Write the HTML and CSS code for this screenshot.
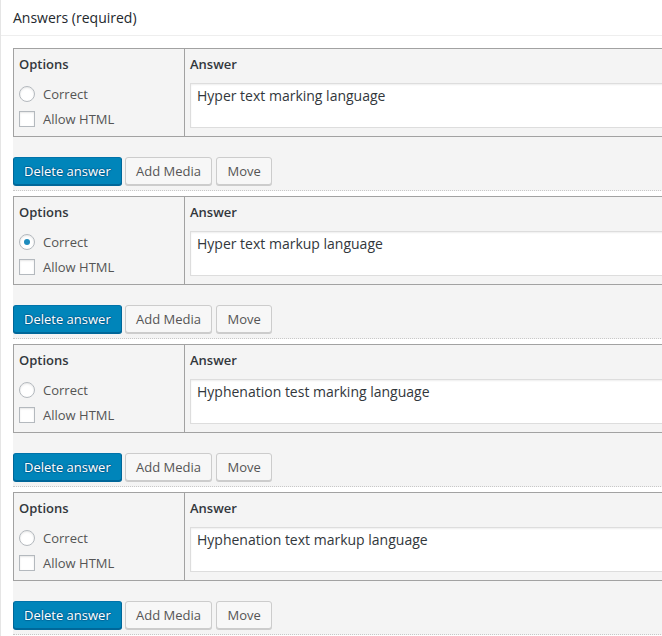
FILE: index.html
```html
<!DOCTYPE html>
<html>
<head>
<meta charset="utf-8">
<link rel="stylesheet" href="styles.css">
</head>
<body>
<div class="postbox">
  <h2 class="box-title">Answers (required)</h2>
  <div class="inside">
    <ul class="answer-list">
      <li class="answer">
        <div class="answer-table">
          <div class="cell cell-options">
            <div class="cell-title">Options</div>
            <label class="opt"><span class="radio"></span><span>Correct</span></label>
            <label class="opt"><span class="check"></span><span>Allow HTML</span></label>
          </div>
          <div class="cell cell-answer">
            <div class="cell-title">Answer</div>
            <div class="textbox">Hyper text marking language</div>
          </div>
        </div>
        <div class="actions"><button class="btn btn-primary">Delete answer</button> <button class="btn">Add Media</button> <button class="btn btn-move">Move</button></div>
      </li>
      <li class="answer">
        <div class="answer-table">
          <div class="cell cell-options">
            <div class="cell-title">Options</div>
            <label class="opt"><span class="radio is-checked"></span><span>Correct</span></label>
            <label class="opt"><span class="check"></span><span>Allow HTML</span></label>
          </div>
          <div class="cell cell-answer">
            <div class="cell-title">Answer</div>
            <div class="textbox">Hyper text markup language</div>
          </div>
        </div>
        <div class="actions"><button class="btn btn-primary">Delete answer</button> <button class="btn">Add Media</button> <button class="btn btn-move">Move</button></div>
      </li>
      <li class="answer">
        <div class="answer-table">
          <div class="cell cell-options">
            <div class="cell-title">Options</div>
            <label class="opt"><span class="radio"></span><span>Correct</span></label>
            <label class="opt"><span class="check"></span><span>Allow HTML</span></label>
          </div>
          <div class="cell cell-answer">
            <div class="cell-title">Answer</div>
            <div class="textbox">Hyphenation test marking language</div>
          </div>
        </div>
        <div class="actions"><button class="btn btn-primary">Delete answer</button> <button class="btn">Add Media</button> <button class="btn btn-move">Move</button></div>
      </li>
      <li class="answer">
        <div class="answer-table">
          <div class="cell cell-options">
            <div class="cell-title">Options</div>
            <label class="opt"><span class="radio"></span><span>Correct</span></label>
            <label class="opt"><span class="check"></span><span>Allow HTML</span></label>
          </div>
          <div class="cell cell-answer">
            <div class="cell-title">Answer</div>
            <div class="textbox">Hyphenation text markup language</div>
          </div>
        </div>
        <div class="actions"><button class="btn btn-primary">Delete answer</button> <button class="btn">Add Media</button> <button class="btn btn-move">Move</button></div>
      </li>
    </ul>
  </div>
</div>
</body>
</html>
```

FILE: styles.css
```css
html, body {
  margin: 0;
  padding: 0;
  overflow: hidden;
  background: #fff;
}

body {
  font-family: "Open Sans", "Liberation Sans", sans-serif;
  color: #32373c;
}

.postbox {
  border-left: 1px solid #e5e5e5;
  min-height: 636px;
  width: 1000px;
  background: #fff;
}

.box-title {
  margin: 0;
  padding: 8px 12px;
  font-size: 14px;
  line-height: 19px;
  font-weight: 400;
  color: #23282d;
  border-bottom: 1px solid #eee;
}

.inside {
  padding: 12px 0 0 12px;
}

.answer-list {
  list-style: none;
  margin: 0;
  padding: 0;
}

.answer {
  background: #f4f4f4;
  padding-bottom: 5px;
  border-bottom: 1px dotted #c8c8c8;
  margin-bottom: 5px;
}

.answer-table {
  display: grid;
  grid-template-columns: 171px 1fr;
  border: 1px solid #a2a2a2;
  background: #f4f4f4;
}

.cell {
  padding: 6px 5px 9px 5px;
}

.cell-answer {
  padding-bottom: 8px;
}

.cell-options {
  border-right: 1px solid #a2a2a2;
}

.cell-title {
  font-size: 13px;
  line-height: 19px;
  font-weight: 600;
  color: #32373c;
}

.opt {
  display: flex;
  align-items: center;
  height: 16px;
  font-size: 13px;
  color: #555;
  margin-top: 9px;
}

.cell-title + .opt {
  margin-top: 12px;
}

.radio,
.check {
  box-sizing: border-box;
  width: 16px;
  height: 16px;
  border: 1px solid #b4b9be;
  background: #fff;
  box-shadow: inset 0 1px 2px rgba(0, 0, 0, 0.1);
  margin-right: 8px;
  flex: none;
  display: flex;
  align-items: center;
  justify-content: center;
}

.radio {
  border-radius: 50%;
}

.radio.is-checked::before {
  content: "";
  width: 6px;
  height: 6px;
  border-radius: 50%;
  background: #1e8cbe;
}

.textbox {
  margin-top: 9px;
  box-sizing: border-box;
  height: 45px;
  border: 1px solid #ddd;
  background: #fff;
  box-shadow: inset 0 1px 2px rgba(0, 0, 0, 0.07);
  padding: 2px 6px;
  font-size: 14px;
  line-height: 20px;
  color: #32373c;
}

.actions {
  margin-top: 20px;
  font-size: 13px;
  height: 28px;
}

.btn {
  display: inline-block;
  box-sizing: border-box;
  height: 28px;
  margin: 0;
  padding: 0 10px 1px;
  font-family: "Open Sans", "Liberation Sans", sans-serif;
  font-size: 13px;
  line-height: 26px;
  color: #555;
  background: #f7f7f7;
  border: 1px solid #ccc;
  border-radius: 3px;
  box-shadow: 0 1px 0 #ccc;
  vertical-align: top;
  white-space: nowrap;
}

.btn-move {
  margin-left: 1px;
}

.btn-primary {
  background: #0085ba;
  border-color: #0073aa #006799 #006799;
  color: #fff;
  box-shadow: 0 1px 0 #006799;
  text-shadow: 0 -1px 1px #006799, 1px 0 1px #006799, 0 1px 1px #006799, -1px 0 1px #006799;
}
```
